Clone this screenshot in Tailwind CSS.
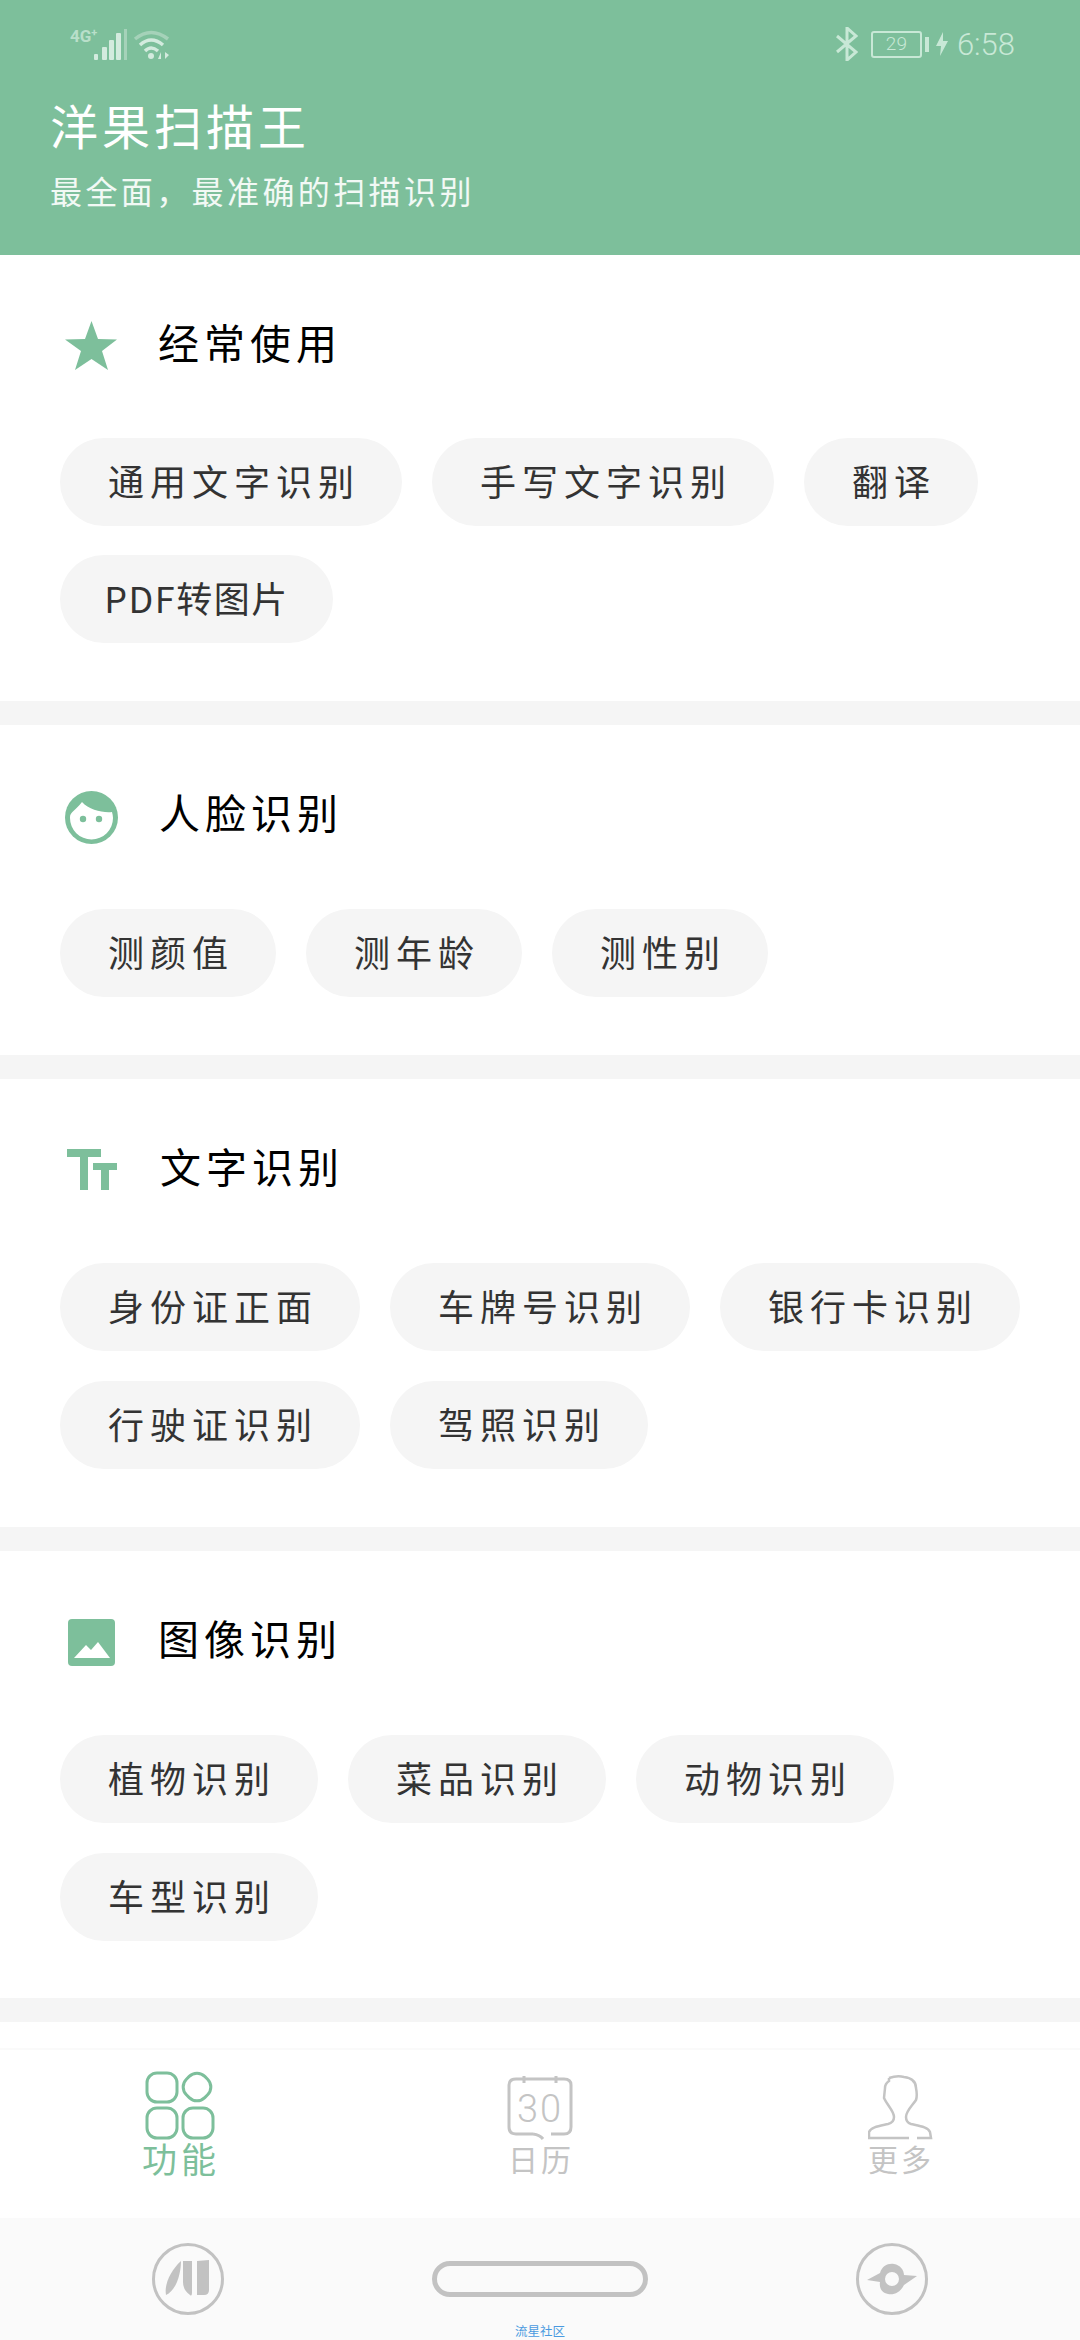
<!DOCTYPE html>
<html lang="zh-CN">

<head>
  <meta charset="UTF-8">
  <meta name="viewport" content="width=device-width, initial-scale=1.0">
  <title>洋果扫描王</title>
  <script src="https://cdn.jsdelivr.net/npm/@tailwindcss/browser@4"></script>
</head>

<body class="bg-white font-['Noto_Sans_CJK_SC',sans-serif]">
  <div class="flex h-[2340px] w-[1080px] flex-col overflow-hidden bg-white">

    <!-- Header with status bar -->
    <header class="h-[255px] shrink-0 bg-[#7dbf9b]">
      <div class="flex h-[88px] items-center justify-between pl-[70px] pr-[65px]">
        <div class="flex items-center">
          <span class="mb-[16px] w-[24px] font-['Roboto',sans-serif] text-[17px] leading-none font-bold whitespace-nowrap text-[#b9dfca]">4G<sup class="text-[11px]">+</sup></span>
          <svg class="mt-[2px]" width="34" height="32" viewBox="0 0 34 32" fill="#d3ebde">
            <rect x="0" y="25" width="4" height="6" rx="1" />
            <rect x="8" y="18" width="5" height="13" rx="1" />
            <rect x="15" y="11" width="5" height="20" rx="1" />
            <rect x="22" y="4" width="5" height="27" rx="1" />
            <rect x="30" y="0" width="3" height="31" fill="#a5d2b9" />
          </svg>
          <svg class="ml-[5px] mt-[2px]" width="38" height="32" viewBox="0 0 38 32" fill="none">
            <path d="M2 10 Q18 -3 35 10" stroke="#a5d2b9" stroke-width="3.500" />
            <path d="M7 16 Q18 6 30 16" stroke="#d3ebde" stroke-width="3.500" />
            <path d="M12 22 Q18 16 25 22" stroke="#d3ebde" stroke-width="3.500" />
            <circle cx="18" cy="27" r="3" fill="#d3ebde" />
            <path d="M25 30 L28 23 V30 Z M32 23 L36 26 L32 30 Z" fill="#d3ebde" />
          </svg>
        </div>
        <div class="flex items-center text-[#c8e8d6]">
          <svg width="22" height="34" viewBox="0 0 22 34" fill="none" stroke="#c8e8d6" stroke-width="3">
            <path d="M1 9 L20 25 L11 33 V1 L20 9 L1 25" />
          </svg>
          <div class="ml-[13px] flex h-[27px] w-[51px] items-center justify-center rounded-[3px] border-2 border-[#c8e8d6] font-['Roboto',sans-serif] text-[19px] font-light">29</div>
          <div class="ml-[3px] h-[15px] w-[4px] bg-[#c8e8d6]"></div>
          <svg class="ml-[7px]" width="12" height="24" viewBox="0 0 12 24" fill="#c8e8d6">
            <path d="M7 0 L0 14 H5 L4 24 L12 9 H7 Z" />
          </svg>
          <span class="ml-[9px] font-['Roboto',sans-serif] text-[31px] leading-none font-light">6:58</span>
        </div>
      </div>
      <h1 class="mt-[8px] pl-[50px] text-[48px] leading-[56px] tracking-[4px] text-white">洋果扫描王</h1>
      <p class="mt-[16px] pl-[50px] text-[32px] leading-[44px] tracking-[3.400px] text-white/90">最全面，最准确的扫描识别</p>
    </header>

    <!-- Section: 经常使用 -->
    <section class="shrink-0 pl-[60px] pr-[40px] pt-[58px] pb-[58px]">
      <div class="mb-[65px] flex h-[60px] items-center">
        <svg class="ml-[5px] mt-[5px]" width="53" height="50" viewBox="0 0 53 50" fill="#7dbf9b">
          <path d="M26.500 0 L33 18 L52 18.500 L37 30 L43 49 L26.500 38 L10 49 L16 30 L0 18.500 L20 18 Z" />
        </svg>
        <h2 class="ml-[40px] pb-[3px] text-[41px] leading-none tracking-[5px] text-black">经常使用</h2>
      </div>
      <div class="flex flex-wrap gap-x-[30px] gap-y-[29px]">
        <span class="flex h-[88px] items-center rounded-full bg-[#f5f5f5] pb-[5px] pl-[48px] pr-[42px] text-[36px] tracking-[6px] text-[#333]">通用文字识别</span>
        <span class="flex h-[88px] items-center rounded-full bg-[#f5f5f5] pb-[5px] pl-[48px] pr-[42px] text-[36px] tracking-[6px] text-[#333]">手写文字识别</span>
        <span class="flex h-[88px] items-center rounded-full bg-[#f5f5f5] pb-[5px] pl-[48px] pr-[42px] text-[36px] tracking-[6px] text-[#333]">翻译</span>
        <span class="flex h-[88px] w-[273px] items-center justify-center rounded-full bg-[#f5f5f5] pb-[5px] text-[36px] tracking-[1.500px] text-[#333]">PDF转图片</span>
      </div>
    </section>
    <div class="h-[24px] shrink-0 bg-[#f5f5f5]"></div>

    <!-- Section: 人脸识别 -->
    <section class="shrink-0 pl-[60px] pr-[40px] pt-[58px] pb-[58px]">
      <div class="mb-[68px] flex h-[58px] items-center">
        <svg class="ml-[5px] mt-[10px]" width="53" height="53" viewBox="0 0 53 53" fill="#7dbf9b">
          <circle cx="26.500" cy="26.500" r="26.500" />
          <path d="M5 26 C5 21 11 19 17 11 C24 19 38 22 47 21 C47.500 23 48 25 48 27 A21.500 21.500 0 0 1 5 27 Z" fill="#fff" />
          <circle cx="18" cy="28" r="3.200" />
          <circle cx="34" cy="28" r="3.200" />
        </svg>
        <h2 class="ml-[41px] pb-[1px] text-[41px] leading-none tracking-[5px] text-black">人脸识别</h2>
      </div>
      <div class="flex flex-wrap gap-x-[30px] gap-y-[30px]">
        <span class="flex h-[88px] items-center rounded-full bg-[#f5f5f5] pb-[5px] pl-[48px] pr-[42px] text-[36px] tracking-[6px] text-[#333]">测颜值</span>
        <span class="flex h-[88px] items-center rounded-full bg-[#f5f5f5] pb-[5px] pl-[48px] pr-[42px] text-[36px] tracking-[6px] text-[#333]">测年龄</span>
        <span class="flex h-[88px] items-center rounded-full bg-[#f5f5f5] pb-[5px] pl-[48px] pr-[42px] text-[36px] tracking-[6px] text-[#333]">测性别</span>
      </div>
    </section>
    <div class="h-[24px] shrink-0 bg-[#f5f5f5]"></div>

    <!-- Section: 文字识别 -->
    <section class="shrink-0 pl-[60px] pr-[40px] pt-[58px] pb-[58px]">
      <div class="mb-[68px] flex h-[58px] items-center">
        <svg class="ml-[6px] mt-[8px]" width="52" height="42" viewBox="0 0 52 42" fill="#7dbf9b">
          <path d="M1 0 H35 V8 H22 V41 H14 V8 H1 Z" />
          <path d="M27 14 H51 V21 H43 V41 H35 V21 H27 Z" />
        </svg>
        <h2 class="ml-[42px] pb-[1px] text-[41px] leading-none tracking-[5px] text-black">文字识别</h2>
      </div>
      <div class="flex flex-wrap gap-x-[30px] gap-y-[30px]">
        <span class="flex h-[88px] items-center rounded-full bg-[#f5f5f5] pb-[5px] pl-[48px] pr-[42px] text-[36px] tracking-[6px] text-[#333]">身份证正面</span>
        <span class="flex h-[88px] items-center rounded-full bg-[#f5f5f5] pb-[5px] pl-[48px] pr-[42px] text-[36px] tracking-[6px] text-[#333]">车牌号识别</span>
        <span class="flex h-[88px] items-center rounded-full bg-[#f5f5f5] pb-[5px] pl-[48px] pr-[42px] text-[36px] tracking-[6px] text-[#333]">银行卡识别</span>
        <span class="flex h-[88px] items-center rounded-full bg-[#f5f5f5] pb-[5px] pl-[48px] pr-[42px] text-[36px] tracking-[6px] text-[#333]">行驶证识别</span>
        <span class="flex h-[88px] items-center rounded-full bg-[#f5f5f5] pb-[5px] pl-[48px] pr-[42px] text-[36px] tracking-[6px] text-[#333]">驾照识别</span>
      </div>
    </section>
    <div class="h-[24px] shrink-0 bg-[#f5f5f5]"></div>

    <!-- Section: 图像识别 -->
    <section class="shrink-0 pl-[60px] pr-[40px] pt-[58px] pb-[57px]">
      <div class="mb-[68px] flex h-[58px] items-center">
        <svg class="ml-[8px] mt-[8px]" width="47" height="47" viewBox="0 0 47 47">
          <rect width="47" height="47" rx="4" fill="#7dbf9b" />
          <path d="M6 39 L18 26 L23 31 L30 23 L42 39 Z" fill="#fff" />
        </svg>
        <h2 class="ml-[43px] pb-[1px] text-[41px] leading-none tracking-[5px] text-black">图像识别</h2>
      </div>
      <div class="flex flex-wrap gap-x-[30px] gap-y-[30px]">
        <span class="flex h-[88px] items-center rounded-full bg-[#f5f5f5] pb-[5px] pl-[48px] pr-[42px] text-[36px] tracking-[6px] text-[#333]">植物识别</span>
        <span class="flex h-[88px] items-center rounded-full bg-[#f5f5f5] pb-[5px] pl-[48px] pr-[42px] text-[36px] tracking-[6px] text-[#333]">菜品识别</span>
        <span class="flex h-[88px] items-center rounded-full bg-[#f5f5f5] pb-[5px] pl-[48px] pr-[42px] text-[36px] tracking-[6px] text-[#333]">动物识别</span>
        <span class="flex h-[88px] items-center rounded-full bg-[#f5f5f5] pb-[5px] pl-[48px] pr-[42px] text-[36px] tracking-[6px] text-[#333]">车型识别</span>
      </div>
    </section>
    <div class="h-[24px] shrink-0 bg-[#f5f5f5]"></div>

    <div class="min-h-0 flex-1 bg-white"></div>

    <!-- Bottom tabs -->
    <nav class="grid h-[170px] shrink-0 grid-cols-3 border-t-2 border-[#fafafa] bg-white pt-[18px]">
      <div class="flex flex-col items-center">
        <div class="flex h-[72px] items-end">
          <svg width="70" height="70" viewBox="0 0 70 70" fill="none" stroke="#7dbf9b" stroke-width="3">
            <rect x="2" y="3" width="30" height="29" rx="10" />
            <rect x="39" y="4" width="26" height="26" rx="11" transform="rotate(45 52 17)" />
            <rect x="2" y="38" width="30" height="30" rx="10" />
            <rect x="38" y="38" width="30" height="30" rx="10" />
          </svg>
        </div>
        <span class="pl-[2px] text-[35px] leading-[36px] tracking-[4px] text-[#7dbf9b]">功能</span>
      </div>
      <div class="flex flex-col items-center">
        <div class="flex h-[72px] items-end">
          <svg width="66" height="65" viewBox="0 0 66 65" fill="none" stroke="#c4c4c4" stroke-width="3">
            <path d="M26 59 H9 Q2 59 2 52 V10 Q2 4 9 4 H57 Q64 4 64 10 V52 Q64 59 57 59 H44 M26 59 Q33 60 36 64" />
            <path d="M17 1 V8 M49 1 V8" />
            <text x="33" y="47" text-anchor="middle" fill="#c4c4c4" stroke="none" font-family="Roboto" font-weight="300" font-size="38" letter-spacing="2">30</text>
          </svg>
        </div>
        <span class="pl-[2px] text-[30px] leading-[36px] tracking-[3px] text-[#c4c4c4]">日历</span>
      </div>
      <div class="flex flex-col items-center">
        <div class="flex h-[72px] items-end">
          <svg width="65" height="65" viewBox="0 0 65 65" fill="none" stroke="#c4c4c4" stroke-width="2.500">
            <path d="M21 3 C27 1 32 1 36 2 C44 3 48 7 48 13 C49 18 49 22 48 25 C44 31 38 36 38 42 C38 46 40 48 43 49 C52 51 60 52 62 57 L63 63 H49" />
            <path d="M21 3 L21 6 C18 8 17 10 17 13 L16 23 C19 30 26 36 26 42 C26 46 24 48 20 49 C11 51 3 52 1 57 L1 63 H41" />
          </svg>
        </div>
        <span class="pl-[2px] text-[30px] leading-[36px] tracking-[3px] text-[#c4c4c4]">更多</span>
      </div>
    </nav>

    <!-- Navigation bar -->
    <div class="relative flex h-[122px] shrink-0 items-center justify-between bg-[#fafafa] px-[152px]">
      <div class="flex h-[72px] w-[72px] items-center justify-center rounded-full border-[3px] border-[#c2c2c2]">
        <svg width="46" height="38" viewBox="0 0 46 38" fill="#c2c2c2">
          <path d="M16 1 C16 12 12 30 1 35 C-1 24 6 10 16 1 Z" />
          <path d="M18 1 H27 V32 Q27 37 25 35 Q18 30 18 22 Z" />
          <path d="M32 1 L44 0 V30 Q44 35 39 35 H32 Z" />
        </svg>
      </div>
      <div class="h-[36px] w-[216px] rounded-full border-[5px] border-[#c2c2c2]"></div>
      <div class="flex h-[72px] w-[72px] items-center justify-center rounded-full border-[3px] border-[#c2c2c2]">
        <svg width="50" height="32" viewBox="0 0 50 32" fill="#c2c2c2">
          <path fill-rule="evenodd" d="M0 17 L13 10 C15 3 21 0 27 1 C33 2 37 7 37 12 L50 13 L37 22 C33 30 27 32 21 31 C15 30 12 25 13 19 Z M25 9 A7 7 0 1 0 25 23 A7 7 0 1 0 25 9 Z" />
        </svg>
      </div>
      <span class="absolute bottom-0 left-[515px] text-[12.500px] leading-[18px] whitespace-nowrap text-[#4a9ae0]">流星社区</span>
    </div>
  </div>
</body>

</html>
